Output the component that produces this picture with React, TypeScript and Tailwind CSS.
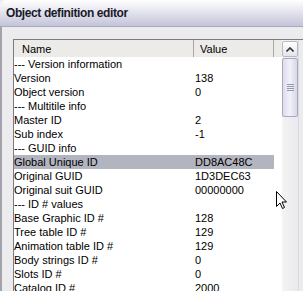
import React from "react";

type Row = { name: string; value?: string; selected?: boolean };

const rows: Row[] = [
  { name: "--- Version information" },
  { name: "Version", value: "138" },
  { name: "Object version", value: "0" },
  { name: "--- Multitile info" },
  { name: "Master ID", value: "2" },
  { name: "Sub index", value: "-1" },
  { name: "--- GUID info" },
  { name: "Global Unique ID", value: "DD8AC48C", selected: true },
  { name: "Original GUID", value: "1D3DEC63" },
  { name: "Original suit GUID", value: "00000000" },
  { name: "--- ID # values" },
  { name: "Base Graphic ID #", value: "128" },
  { name: "Tree table ID #", value: "129" },
  { name: "Animation table ID #", value: "129" },
  { name: "Body strings ID #", value: "0" },
  { name: "Slots ID #", value: "0" },
  { name: "Catalog ID #", value: "2000" },
];

function Cursor() {
  return (
    <svg
      width="12"
      height="19"
      viewBox="0 0 12 19"
      className="absolute left-[276px] top-[191px]"
    >
      <path
        d="M0.5 0.5 L0.5 15.5 L4 12 L6.5 17.5 L8.5 16.5 L6 11 L10.5 11 Z"
        fill="white"
        stroke="black"
        strokeWidth="1"
      />
    </svg>
  );
}

export default function App() {
  return (
    <div className="relative h-[291px] w-[303px] overflow-hidden bg-[#ecebee] font-['Liberation_Sans',sans-serif]">
      {/* title bar */}
      <div className="flex h-[27px] items-center rounded-tl-[6px] border-b border-[#a9a9bd] bg-gradient-to-b from-[#ffffff] to-[#c4c4da] pl-[6px]">
        <span className="text-[12px] font-bold tracking-[-0.4px] text-[#1a1a2a]">
          Object definition editor
        </span>
      </div>

      <div className="flex h-[264px] border-l-2 border-[#a3a3ab]">
        <div className="ml-[11px] mt-[12px] flex flex-1 border-l border-t border-[#7b7b80] bg-white">
          <div className="flex w-[268px] flex-col text-[11px] leading-[14px] text-black">
            <div className="flex h-[17px] shrink-0 bg-[#ecebe8] text-[11px]">
              <div className="flex w-[180px] items-center border-r border-[#a7a6aa] pl-[8px]">
                Name
              </div>
              <div className="flex w-[80px] items-center border-r border-[#a7a6aa] pl-[6px]">
                Value
              </div>
              <div className="flex-1" />
            </div>
            {rows.map((r) => (
              <div
                key={r.name}
                className={
                  r.selected
                    ? "flex h-[14px] w-[260px] shrink-0 bg-[#b2b4bf]"
                    : "flex h-[14px] w-[260px] shrink-0"
                }
              >
                <div className="w-[181px] whitespace-nowrap">{r.name}</div>
                <div className="whitespace-nowrap">{r.value}</div>
              </div>
            ))}
          </div>

          {/* scrollbar */}
          <div className="flex w-[16px] flex-col bg-gradient-to-r from-[#f4f4f2] to-[#e9e9ef]">
            <div className="mt-[1px] flex h-[16px] items-center justify-center rounded-[2px] border border-[#b8b8c8] bg-gradient-to-b from-[#ffffff] to-[#e3e3ec]">
              <svg width="8" height="5" viewBox="0 0 8 5">
                <path d="M0.5 4.5 L4 1 L7.5 4.5" fill="none" stroke="#333" strokeWidth="1.6" />
              </svg>
            </div>
            <div className="mt-[1px] flex h-[59px] items-center justify-center rounded-[2px] border border-[#a8a8c0] bg-gradient-to-r from-[#dcdcec] via-[#f2f2fa] to-[#d6d6e6]">
              <div className="flex flex-col gap-[1px]">
                <div className="h-[1px] w-[7px] bg-[#9a9aae]" />
                <div className="h-[1px] w-[7px] bg-[#9a9aae]" />
                <div className="h-[1px] w-[7px] bg-[#9a9aae]" />
                <div className="h-[1px] w-[7px] bg-[#9a9aae]" />
              </div>
            </div>
          </div>
          <div className="w-[5px] border-l border-[#d8d8de] bg-[#ecebee]" />
        </div>
      </div>
      <Cursor />
    </div>
  );
}
